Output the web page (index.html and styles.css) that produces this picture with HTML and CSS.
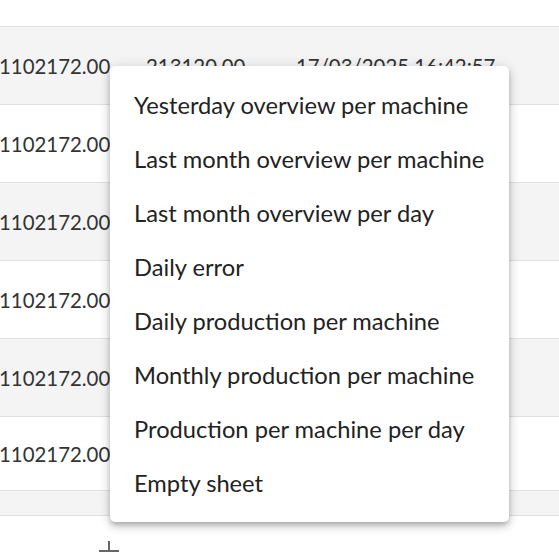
FILE: index.html
```
<!DOCTYPE html>
<html>
<head>
<meta charset="utf-8">
<link rel="stylesheet" href="styles.css">
</head>
<body>
<div class="table">
  <div class="row alt"><span class="c1">1102172.00</span><span class="c2">213120.00</span><span class="c3">17/03/2025 16:42:57</span></div>
  <div class="row"><span class="c1">1102172.00</span><span class="c2">213120.00</span><span class="c3">17/03/2025 16:42:57</span></div>
  <div class="row alt"><span class="c1">1102172.00</span><span class="c2">213120.00</span><span class="c3">17/03/2025 16:42:57</span></div>
  <div class="row"><span class="c1">1102172.00</span><span class="c2">213120.00</span><span class="c3">17/03/2025 16:42:57</span></div>
  <div class="row alt"><span class="c1">1102172.00</span><span class="c2">213120.00</span><span class="c3">17/03/2025 16:42:57</span></div>
  <div class="row short"><span class="c1">1102172.00</span><span class="c2">213120.00</span><span class="c3">17/03/2025 16:42:57</span></div>
  <div class="row alt footer"></div>
</div>
<div class="add">
  <svg width="22" height="22" viewBox="0 0 22 22"><path d="M11 1V21M1 11H21" stroke="#666" stroke-width="2" fill="none"/></svg>
</div>
<ul class="menu">
  <li>Yesterday overview per machine</li>
  <li>Last month overview per machine</li>
  <li>Last month overview per day</li>
  <li>Daily error</li>
  <li>Daily production per machine</li>
  <li>Monthly production per machine</li>
  <li>Production per machine per day</li>
  <li>Empty sheet</li>
</ul>
</body>
</html>
```
FILE: styles.css
```
html, body {
  margin: 0;
  padding: 0;
  background: #fff;
  font-family: Lato, "Open Sans", sans-serif;
  overflow: hidden;
}
.table {
  margin-top: 26px;
  border-top: 1px solid #e0e0e0;
}
.row {
  display: flex;
  align-items: center;
  height: 77px;
  border-bottom: 1px solid #e0e0e0;
  font-size: 20.4px;
  color: #333;
  background: #fff;
}
.row.alt { background: #f4f4f4; }
.row.short { height: 73px; }
.row.footer { height: 24px; }
.c1 { width: 147px; margin-left: -1px; flex: none; }
.c2 { width: 150px; flex: none; }
.c3 { flex: none; }
.add {
  padding-top: 24px;
  padding-left: 98px;
  line-height: 0;
}
.menu {
  position: absolute;
  left: 110px;
  top: 66px;
  width: 399px;
  height: 456px;
  box-sizing: border-box;
  margin: 0;
  padding: 12px 0;
  list-style: none;
  background: #fff;
  border-radius: 5px;
  box-shadow: 0 3px 5px -1px rgba(0,0,0,0.2), 0 5px 8px 0 rgba(0,0,0,0.14), 0 1px 14px 0 rgba(0,0,0,0.12);
}
.menu li {
  height: 54px;
  display: flex;
  align-items: center;
  padding-left: 24px;
  font-size: 23.7px;
  color: #222;
}
```
